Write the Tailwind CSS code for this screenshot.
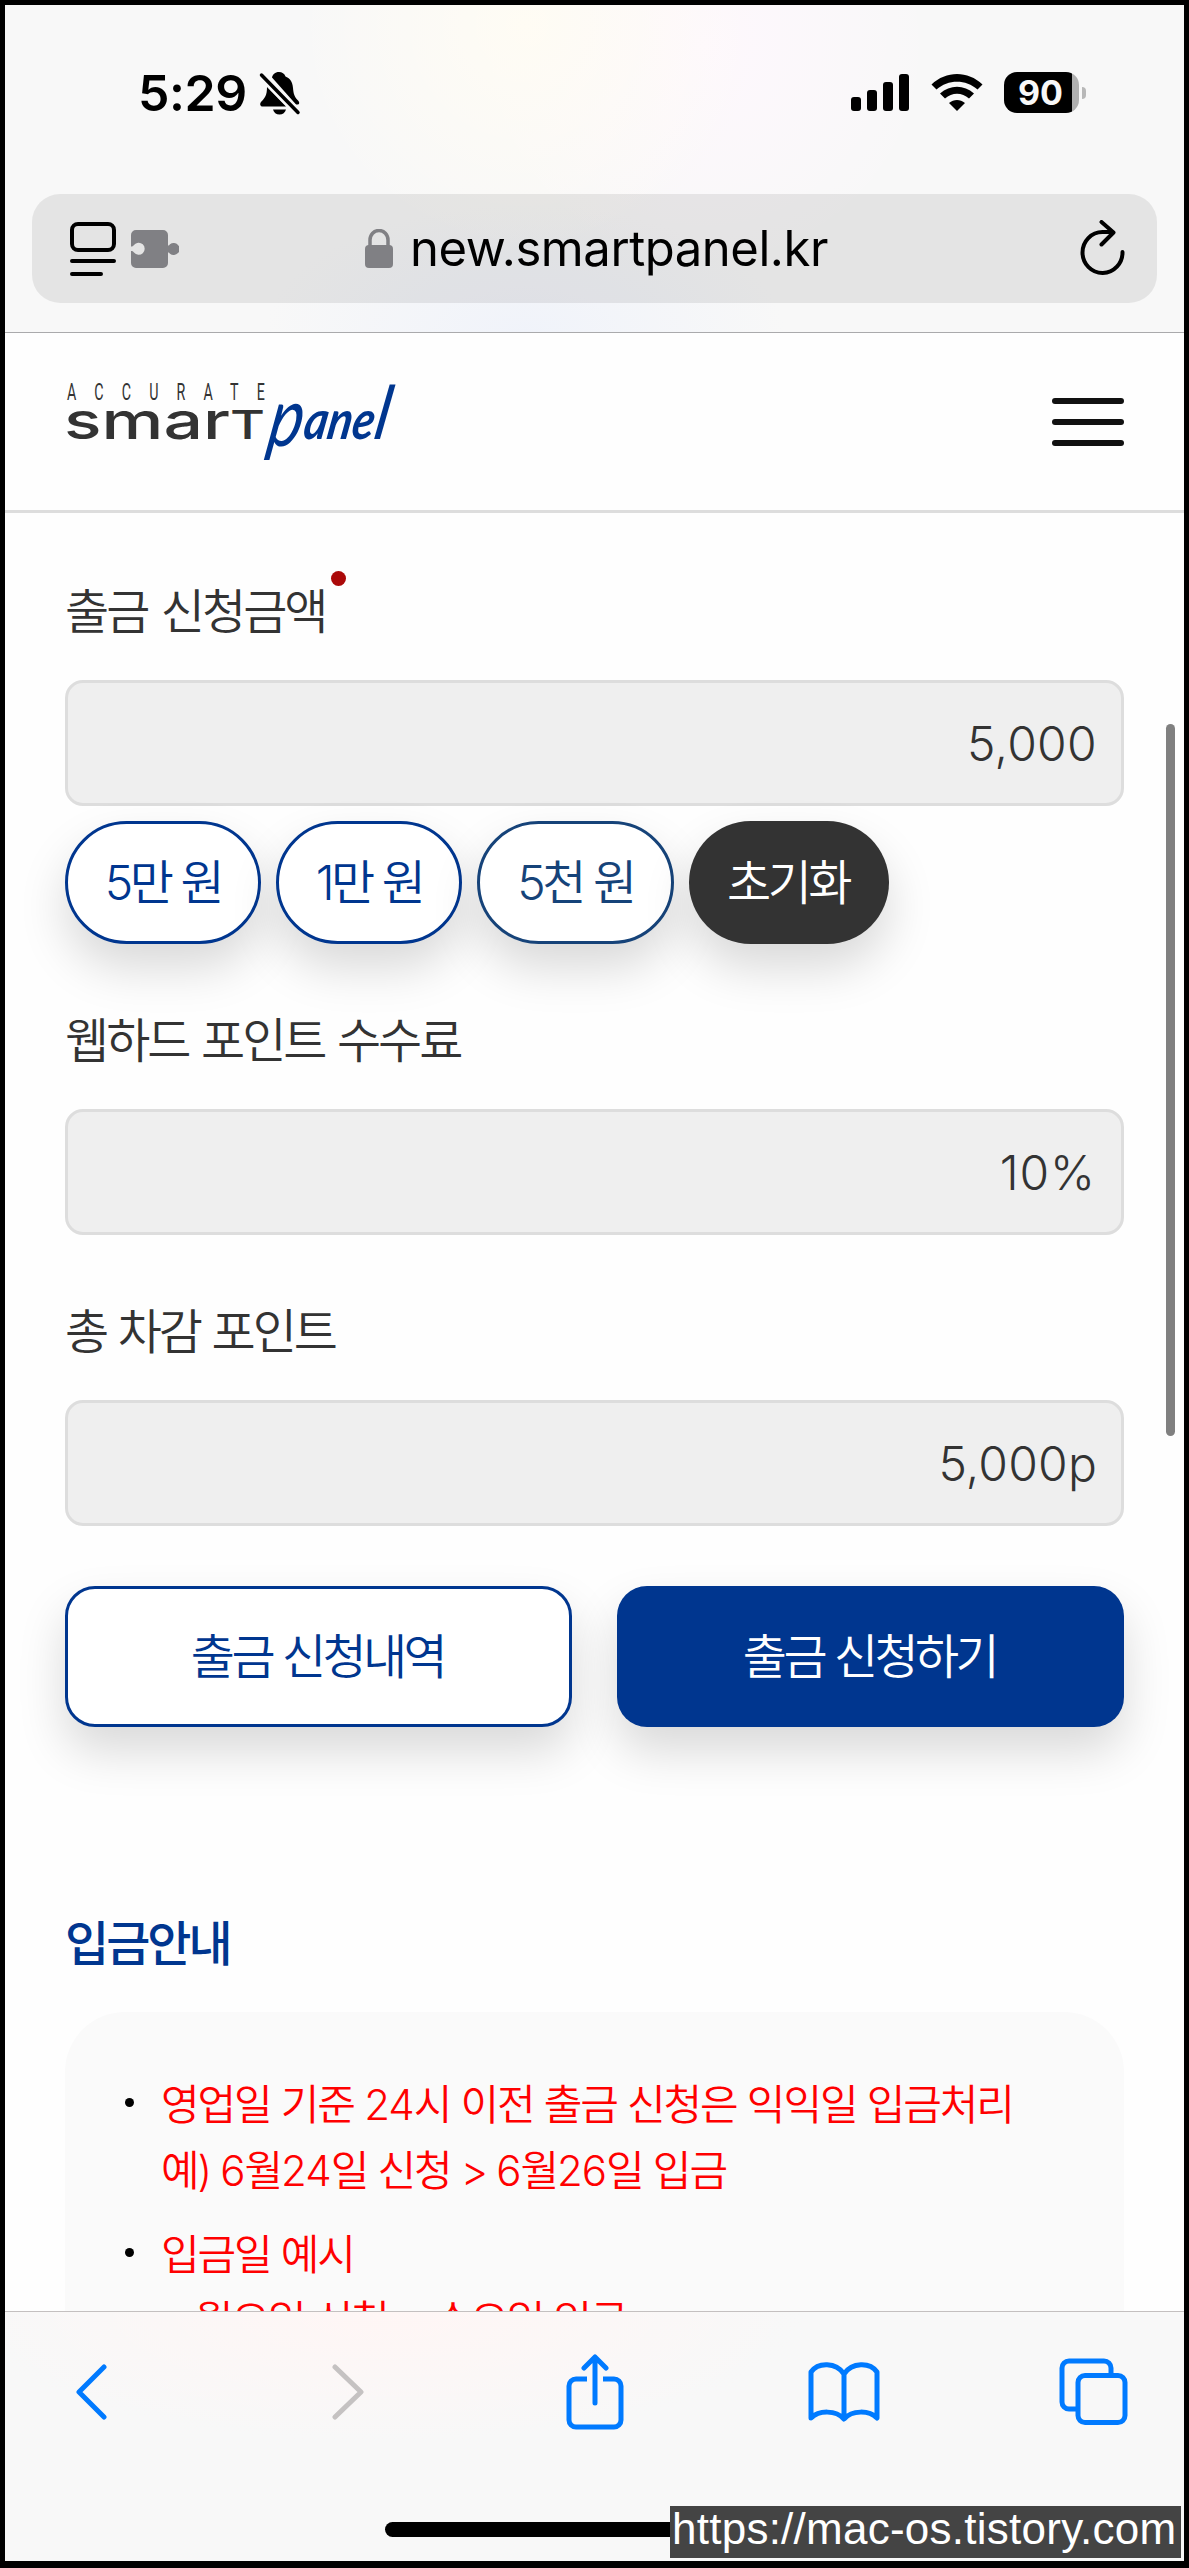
<!DOCTYPE html>
<html lang="ko">
<head>
    <meta charset="UTF-8">
    <meta name="viewport" content="width=device-width, initial-scale=1.0">
    <title>스마트패널 - 출금 신청</title>
    <script src="https://cdn.jsdelivr.net/npm/@tailwindcss/browser@4"></script>
</head>
<body class="bg-black">
    <div class="relative w-[1189px] h-[2568px] border-[5px] border-b-[7px] border-black bg-[#fefefe] flex flex-col overflow-hidden font-['Inter','Noto_Sans_CJK_KR',sans-serif] text-[#333]">

        <!-- Status bar + address bar -->
        <div class="h-[328px] shrink-0 border-b border-[#aaaaac] bg-[#f8f8f8] bg-[radial-gradient(circle_at_520px_20px,#fffcf4_0,transparent_230px),radial-gradient(circle_at_700px_40px,#fef8fd_0,transparent_230px),radial-gradient(ellipse_at_520px_330px,#f0f3fa_0,transparent_260px)] text-black">
            <div class="h-[189px] pt-[60px] pl-[133px] pr-[98px] flex justify-between items-start">
                <div class="flex items-center">
                    <span class="text-[50px] leading-[56px] font-semibold tracking-[-0.4px]">5:29</span>
                    <svg class="w-[42px] h-[44px] ml-[12px]" viewBox="0 0 42 44">
                        <path d="M20 1c-4 0-6.500 2.500-7 5.500l24 27h1.500c2 0 2.200-2 1-3.500-4-4-5-7-5.500-13C33.500 10 30.500 7 26.500 5.500 25.500 2.500 23 1 20 1zM8 16c0 8-2 11-6 15-1.500 2-.8 4.500 1.500 4.500H27zM14 38.500h13c-.8 3-3.200 5-6.500 5s-5.700-2-6.500-5z"/>
                        <path d="M2.500 4L39 41.500" stroke="#f8f8f8" stroke-width="8"/>
                        <path d="M2.500 4L39 41.500" stroke="#000" stroke-width="3.500" stroke-linecap="round"/>
                    </svg>
                </div>
                <div class="flex items-center pt-[7px]">
                    <svg class="w-[58px] h-[38px]" viewBox="0 0 58 38">
                        <rect x="0" y="23" width="10" height="14" rx="3"/>
                        <rect x="16" y="16" width="10" height="21" rx="3"/>
                        <rect x="32" y="8" width="10" height="29" rx="3"/>
                        <rect x="48" y="0" width="10" height="37" rx="3"/>
                    </svg>
                    <svg class="w-[52px] h-[38px] ml-[22px]" viewBox="0 0 52 38">
                        <path d="M0.500 10.500C15-3.500 37-3.500 51.500 10.500L46.500 15.500C35 5 17 5 5.500 15.500zM9 19.500c10-9 24-9 34 0L38 24.500c-7-6.500-17-6.500-24 0zM18 29c5-4 11-4 16 0L26 37z"/>
                    </svg>
                    <div class="ml-[21px] w-[75px] h-[41px] rounded-[13px] bg-[linear-gradient(90deg,#000_68px,#b0b0b0_68px)] flex items-center justify-center">
                        <span class="text-[34px] leading-none font-bold text-[#f8f8f8] mr-[2px]">90</span>
                    </div>
                    <div class="w-[4px] h-[12px] ml-[3px] rounded-r-full bg-[#b8b8b8]"></div>
                </div>
            </div>
            <div class="mx-[27px] h-[109px] rounded-[28px] bg-black/8 flex items-center pl-[37px] pr-[30px]">
                <svg class="w-[47px] h-[56px]" viewBox="0 0 47 56" fill="none" stroke="#000" stroke-width="4" stroke-linecap="round">
                    <rect x="3" y="3" width="42" height="26" rx="6"/>
                    <path d="M3 40h42M3 53h29"/>
                </svg>
                <svg class="w-[48px] h-[40px] ml-[15px]" viewBox="0 0 48 40" fill="#808084">
                    <path d="M5 1h27a5 5 0 0 1 5 5v10.500c1 0 1.300-.5 2-1.300a6 6 0 1 1 0 9.600c-.7-.8-1-1.300-2-1.300V34a5 5 0 0 1-5 5H5a5 5 0 0 1-5-5V22c1.500 0 2 .3 3 1.500a6 6 0 1 0 0-7.500c-1 1.200-1.500 1.500-3 1.500V6a5 5 0 0 1 5-5z"/>
                </svg>
                <svg class="w-[28px] h-[40px] ml-[186px]" viewBox="0 0 28 40">
                    <rect x="0" y="16" width="28" height="23" rx="4" fill="#808084"/>
                    <path d="M5 17v-6a9 9.500 0 0 1 18 0v6" fill="none" stroke="#808084" stroke-width="3.500"/>
                </svg>
                <span class="ml-[17px] text-[49px] tracking-[-0.45px] leading-none">new.smartpanel.kr</span>
                <svg class="w-[48px] h-[58px] ml-auto" viewBox="0 0 48 58" fill="none" stroke="#000" stroke-width="4" stroke-linecap="round" stroke-linejoin="round">
                    <path d="M43.500 32A20 20.500 0 1 1 23.500 12h10M22.500 2L34.500 12.500 22.500 24.500"/>
                </svg>
            </div>
        </div>

        <!-- Site header -->
        <header class="h-[180px] shrink-0 border-b-[3px] border-[#ddd] flex items-center justify-between px-[60px]">
            <svg class="w-[340px] h-[100px] overflow-visible" viewBox="0 0 340 100" fill="#333">
                <g transform="translate(2 28) scale(.62 1)">
                    <text textLength="319" font-family="Roboto" font-size="23">ACCURATE</text>
                </g>
                <text x="-1" y="66.500" textLength="201" lengthAdjust="spacingAndGlyphs" font-family="Inter" font-weight="500" font-size="52">smar<tspan font-size="40">T</tspan></text>
                <g transform="translate(204 66.500) skewX(-10)" font-family="Lato" font-style="italic" font-weight="700" fill="#00368f">
                    <text font-size="54"><tspan x="-2" y="7" font-size="82" font-weight="400" textLength="34" lengthAdjust="spacingAndGlyphs">p</tspan><tspan x="33" y="0" textLength="70" lengthAdjust="spacingAndGlyphs">ane</tspan><tspan x="103" y="0" font-size="74" font-weight="400" textLength="15" lengthAdjust="spacingAndGlyphs">l</tspan></text>
                </g>
            </svg>
            <div class="w-[72px] flex flex-col gap-[15px]">
                <span class="h-[6px] rounded-full bg-[#111]"></span>
                <span class="h-[6px] rounded-full bg-[#111]"></span>
                <span class="h-[6px] rounded-full bg-[#111]"></span>
            </div>
        </header>

        <!-- Withdrawal form -->
        <main class="grow min-h-0 overflow-hidden px-[60px] pt-[59px] font-[350]">
            <label class="relative block w-fit text-[48px] leading-[80px] tracking-[-3px] [word-spacing:3px]">출금 신청금액<span class="absolute -right-[21px] -top-px size-[15px] rounded-full bg-[#ab0909]"></span></label>
            <input type="text" readonly value="5,000" class="mt-[28px] block w-full h-[126px] rounded-[18px] border-[3px] border-[#ddd] bg-[#efefef] px-[24px] text-right text-[48px] tracking-[0.3px]">

            <div class="mt-[15px] flex gap-[15px] text-[48px] tracking-[-3.5px] [word-spacing:1px]">
                <button class="w-[196px] h-[123px] rounded-full border-[3px] border-[#00368f] bg-white text-[#00368f] shadow-[0_24px_48px_rgba(0,0,0,0.15)]">5만 원</button>
                <button class="w-[186px] h-[123px] rounded-full border-[3px] border-[#00368f] bg-white text-[#00368f] shadow-[0_24px_48px_rgba(0,0,0,0.15)]">1만 원</button>
                <button class="w-[197px] h-[123px] rounded-full border-[3px] border-[#164379] bg-white text-[#164379] shadow-[0_24px_48px_rgba(0,0,0,0.15)]">5천 원</button>
                <button class="w-[200px] h-[123px] rounded-full bg-[#333] pr-[2px] text-white shadow-[0_24px_48px_rgba(0,0,0,0.15)]">초기화</button>
            </div>

            <label class="mt-[57px] block text-[48px] leading-[80px] tracking-[-3px] [word-spacing:2px]">웹하드 포인트 수수료</label>
            <input type="text" readonly value="10%" class="mt-[28px] block w-full h-[126px] rounded-[18px] border-[3px] border-[#ddd] bg-[#efefef] px-[25px] text-right text-[48px] tracking-[0.9px]">

            <label class="mt-[57px] block text-[48px] leading-[80px] tracking-[-3px] [word-spacing:1px]">총 차감 포인트</label>
            <input type="text" readonly value="5,000p" class="mt-[28px] block w-full h-[126px] rounded-[18px] border-[3px] border-[#ddd] bg-[#efefef] px-[24px] text-right text-[48px] tracking-[0.2px]">

            <div class="mt-[60px] grid grid-cols-2 gap-[45px] text-[48px] tracking-[-3.6px]">
                <button class="h-[141px] rounded-[30px] border-[3px] border-[#00368f] bg-white pr-[2px] text-[#00368f] shadow-[0_24px_48px_rgba(0,0,0,0.15)]">출금 신청내역</button>
                <button class="h-[141px] rounded-[30px] bg-[#00368f] pr-[2px] text-white shadow-[0_24px_48px_rgba(0,0,0,0.15)]">출금 신청하기</button>
            </div>

            <h2 class="mt-[177px] text-[48px] leading-[80px] tracking-[-3px] font-medium text-[#00368f]">입금안내</h2>
            <ul class="mt-[28px] h-[400px] rounded-[60px] bg-[#fafafa] pt-[60px] pl-[96px] text-[42px] leading-[66px] tracking-[-2.1px] [word-spacing:0.5px] text-[#f00]">
                <li class="relative">
                    <span class="absolute -left-[36px] top-[26px] size-[9px] rounded-full bg-black"></span>
                    영업일 기준 <span class="tracking-[-1px]">24</span>시 이전 출금 신청은 익익일 입금처리<br>예) <span class="tracking-[-1px]">6</span>월<span class="tracking-[-1px]">24</span>일 신청 &gt; <span class="tracking-[-1px]">6</span>월<span class="tracking-[-1px]">26</span>일 입금
                </li>
                <li class="relative mt-[18px]">
                    <span class="absolute -left-[36px] top-[26px] size-[9px] rounded-full bg-black"></span>
                    입금일 예시
                    <p class="pl-[34px]">월요일 신청 &gt; 수요일 입금</p>
                </li>
            </ul>
        </main>

        <!-- Scroll indicator -->
        <div class="absolute left-[1161px] top-[719px] w-[9px] h-[712px] rounded-full bg-[#808080]"></div>

        <!-- Browser toolbar -->
        <nav class="h-[250px] shrink-0 border-t border-[#c4c0c0] bg-[#f8f8f8] bg-[radial-gradient(ellipse_at_380px_0px,#fff6f5_0,transparent_420px)] pt-[42px] pl-[50px] pr-[54px]">
            <div class="flex justify-between items-center h-[76px] fill-none stroke-[#007aff] stroke-[5px]">
                <svg class="w-[72px] h-[56px]" viewBox="0 0 72 56" stroke-linecap="round" stroke-linejoin="round"><path d="M49 3L24 28l25 25"/></svg>
                <svg class="w-[72px] h-[56px] stroke-[#c5c2c2]" viewBox="0 0 72 56" stroke-linecap="round" stroke-linejoin="round"><path d="M29 3l26 25-26 25"/></svg>
                <svg class="w-[72px] h-[76px]" viewBox="-8 -2 72 76" stroke-linecap="round" stroke-linejoin="round"><path stroke-linecap="butt" d="M22 23h-11a7 7 0 0 0-7 7v34a7 7 0 0 0 7 7h38a7 7 0 0 0 7-7V30a7 7 0 0 0-7-7H38"/><path d="M30 47V1M19 12L30 1 41 12"/></svg>
                <svg class="w-[72px] h-[60px] overflow-visible" viewBox="-1 0 72 60" stroke-linejoin="round"><path d="M36 12C28 0 10 0 3 10V56C11 48 28 48 36 57 44 48 61 48 69 56V10C62 0 44 0 36 12zV57"/></svg>
                <svg class="w-[72px] h-[68px]" viewBox="0 0 72 68"><path d="M53 17V10a7 7 0 0 0-7-7H11a7 7 0 0 0-7 7v34a7 7 0 0 0 7 7h8"/><rect x="20" y="17.500" width="47" height="47" rx="7"/></svg>
            </div>
        </nav>
        <div class="absolute left-[380px] top-[2517px] w-[420px] h-[15px] rounded-full bg-black"></div>

        <!-- Watermark -->
        <div class="absolute left-[665px] top-[2501px] w-[511px] h-[52px] bg-[#444] pl-[2px] font-['Liberation_Sans',sans-serif] text-[44px] leading-[46px] tracking-[0.25px] text-white whitespace-nowrap">https://mac-os.tistory.com</div>
    </div>
</body>
</html>
